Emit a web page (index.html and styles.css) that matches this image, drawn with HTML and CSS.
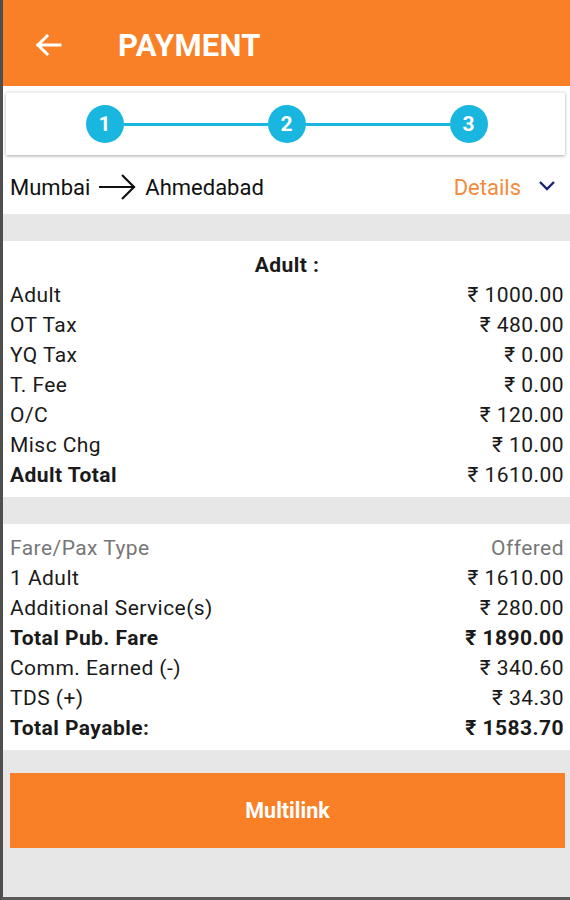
FILE: index.html
```html
<!DOCTYPE html>
<html lang="en">
<head>
 <meta charset="UTF-8">
 <meta name="viewport" content="width=device-width, initial-scale=1.0">
 <title>Payment</title>
 <link rel="stylesheet" href="styles.css">
</head>
<body>
<div class="screen">
 <div class="topbar">
  <svg class="back" width="28" height="24" viewBox="0 0 28 24">
   <path d="M26 12H4M13 3L4 12l9 9" fill="none" stroke="#fff" stroke-width="3" stroke-linecap="square"/>
  </svg>
  <span class="title">PAYMENT</span>
 </div>

 <div class="top-area">
  <div class="steps">
   <div class="track">
    <span class="step">1</span>
    <span class="bar"></span>
    <span class="step">2</span>
    <span class="bar"></span>
    <span class="step">3</span>
   </div>
  </div>
  <div class="route">
   <span>Mumbai</span>
   <svg class="arrow" width="38" height="26" viewBox="0 0 38 26">
    <path d="M0 13h36M23 1l12 12-12 12" fill="none" stroke="#111" stroke-width="2.2"/>
   </svg>
   <span>Ahmedabad</span>
   <span class="details">Details</span>
   <svg class="chev" width="18" height="12" viewBox="0 0 18 12">
    <path d="M2 2l7 7 7-7" fill="none" stroke="#1a2370" stroke-width="2.4"/>
   </svg>
  </div>
 </div>

 <div class="gap"></div>

 <div class="fare">
  <div class="row head">Adult :</div>
  <div class="row"><span>Adult</span><span>₹ 1000.00</span></div>
  <div class="row"><span>OT Tax</span><span>₹ 480.00</span></div>
  <div class="row"><span>YQ Tax</span><span>₹ 0.00</span></div>
  <div class="row"><span>T. Fee</span><span>₹ 0.00</span></div>
  <div class="row"><span>O/C</span><span>₹ 120.00</span></div>
  <div class="row"><span>Misc Chg</span><span>₹ 10.00</span></div>
  <div class="row"><span class="b">Adult Total</span><span>₹ 1610.00</span></div>
 </div>

 <div class="gap"></div>

 <div class="fare">
  <div class="row muted"><span>Fare/Pax Type</span><span>Offered</span></div>
  <div class="row"><span>1 Adult</span><span>₹ 1610.00</span></div>
  <div class="row"><span>Additional Service(s)</span><span>₹ 280.00</span></div>
  <div class="row b"><span>Total Pub. Fare</span><span>₹ 1890.00</span></div>
  <div class="row"><span>Comm. Earned (-)</span><span>₹ 340.60</span></div>
  <div class="row"><span>TDS (+)</span><span>₹ 34.30</span></div>
  <div class="row b"><span>Total Payable:</span><span>₹ 1583.70</span></div>
 </div>

 <button class="pay">Multilink</button>
</div>
</body>
</html>
```

FILE: styles.css
```css
* { box-sizing: border-box; }
body {
margin: 0;
font-family: Roboto, "Liberation Sans", sans-serif;
}
.screen {
width: 570px;
height: 900px;
background: #e7e7e7;
border-left: 3px solid #4f4f4f;
border-bottom: 3px solid #5a5a5a;
display: flex;
flex-direction: column;
overflow: hidden;
}
.topbar {
height: 86px;
background: #f98026;
display: flex;
align-items: center;
padding: 4px 0 0 31px;
color: #fff;
}
.back { margin-right: 56px; }
.title {
font-size: 31px;
font-weight: bold;
letter-spacing: 0.3px;
}
.top-area {
background: #fff;
padding-top: 6px;
}
.steps {
margin: 0 5px 0 3px;
height: 63px;
background: #fff;
box-shadow: 0 1px 3px rgba(0,0,0,0.35);
border-top: 1px solid #eee;
display: flex;
align-items: center;
justify-content: center;
}
.track {
display: flex;
align-items: center;
width: 402px;
margin-left: 2px;
}
.step {
width: 38px;
height: 38px;
border-radius: 50%;
background: #19b6e0;
color: #fff;
font-weight: bold;
font-size: 21px;
display: flex;
align-items: center;
justify-content: center;
flex: none;
}
.bar {
flex: 1;
height: 3px;
background: #19b6e0;
}
.route {
height: 59px;
display: flex;
align-items: center;
padding: 5px 14px 0 7px;
font-size: 22px;
color: #111;
}
.arrow { margin: 0 8px 0 9px; }
.details {
margin-left: auto;
color: #f58a3c;
margin-right: 17px;
}
.chev { margin-bottom: 2px; }
.gap { height: 27px; }
.fare {
background: #fff;
padding: 9px 6px 7px 7px;
}
.row {
height: 30px;
display: flex;
justify-content: space-between;
align-items: center;
font-size: 21px;
letter-spacing: 0.45px;
color: #1a1a1a;
}
.row.head {
justify-content: center;
font-weight: bold;
font-size: 21px;
}
.b { font-weight: bold; }
.muted { color: #777; }
.pay {
margin: 23px 5px 0 7px;
height: 75px;
border: none;
background: #f98026;
color: #fff;
font-family: Roboto, "Liberation Sans", sans-serif;
font-size: 21.5px;
font-weight: bold;
}
```
